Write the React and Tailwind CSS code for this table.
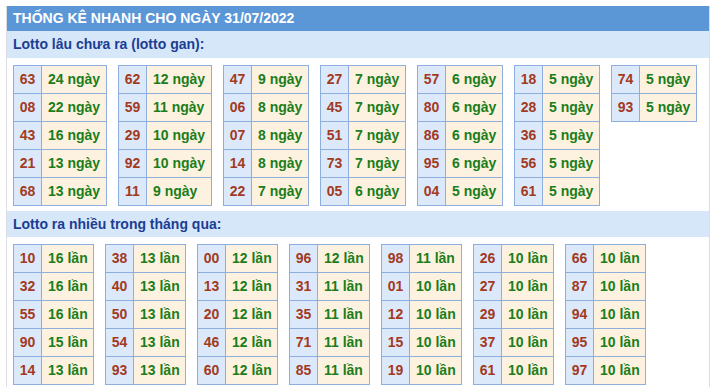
const ganTables = [
  { w: 'w-[65px]', rows: [['63', '24 ngày'], ['08', '22 ngày'], ['43', '16 ngày'], ['21', '13 ngày'], ['68', '13 ngày']] },
  { w: 'w-[65px]', rows: [['62', '12 ngày'], ['59', '11 ngày'], ['29', '10 ngày'], ['92', '10 ngày'], ['11', '9 ngày']] },
  { w: 'w-[57px]', rows: [['47', '9 ngày'], ['06', '8 ngày'], ['07', '8 ngày'], ['14', '8 ngày'], ['22', '7 ngày']] },
  { w: 'w-[57px]', rows: [['27', '7 ngày'], ['45', '7 ngày'], ['51', '7 ngày'], ['73', '7 ngày'], ['05', '6 ngày']] },
  { w: 'w-[57px]', rows: [['57', '6 ngày'], ['80', '6 ngày'], ['86', '6 ngày'], ['95', '6 ngày'], ['04', '5 ngày']] },
  { w: 'w-[57px]', rows: [['18', '5 ngày'], ['28', '5 ngày'], ['36', '5 ngày'], ['56', '5 ngày'], ['61', '5 ngày']] },
  { w: 'w-[57px]', rows: [['74', '5 ngày'], ['93', '5 ngày']] },
];

const nhieuTables = [
  [['10', '16 lần'], ['32', '16 lần'], ['55', '16 lần'], ['90', '15 lần'], ['14', '13 lần']],
  [['38', '13 lần'], ['40', '13 lần'], ['50', '13 lần'], ['54', '13 lần'], ['93', '13 lần']],
  [['00', '12 lần'], ['13', '12 lần'], ['20', '12 lần'], ['46', '12 lần'], ['60', '12 lần']],
  [['96', '12 lần'], ['31', '11 lần'], ['35', '11 lần'], ['71', '11 lần'], ['85', '11 lần']],
  [['98', '11 lần'], ['01', '10 lần'], ['12', '10 lần'], ['15', '10 lần'], ['19', '10 lần']],
  [['26', '10 lần'], ['27', '10 lần'], ['29', '10 lần'], ['37', '10 lần'], ['61', '10 lần']],
  [['66', '10 lần'], ['87', '10 lần'], ['94', '10 lần'], ['95', '10 lần'], ['97', '10 lần']],
];

const LottoTable = ({ rows, valueWidth }) => (
  <div className="flex flex-col shrink-0 border-l border-t border-[#8eaede] self-start">
    {rows.map(([num, val]) => (
      <div key={num} className="flex h-[28px]">
        <div className="w-[28px] flex items-center justify-center bg-[#dce9fa] border-r border-b border-[#8eaede] text-[#a23a1f]">
          {num}
        </div>
        <div className={`${valueWidth} flex items-center pl-[6px] bg-[#fdf2df] border-r border-b border-[#8eaede] text-[#1b7d1b] whitespace-nowrap`}>
          {val}
        </div>
      </div>
    ))}
  </div>
);

const SectionTitle = ({ children }) => (
  <div className="bg-[#d6e7f9] px-[6px] flex items-center text-[14px] font-bold text-[#1c3d94]">
    {children}
  </div>
);

export default function App() {
  return (
    <div className="w-[714px] h-[387px] bg-white overflow-hidden pt-[6px] font-['Liberation_Sans',Arial,sans-serif]">
      <div className="ml-[6px] w-[704px] h-[381px] border-l border-r border-[#dadde3]">
        <div className="h-[25px] bg-[#5b96d7] text-white font-bold text-[14px] flex items-center px-[6px] uppercase">
          THỐNG KÊ NHANH CHO NGÀY 31/07/2022
        </div>
        <SectionTitle>
          <span className="h-[27px] leading-[27px]">Lotto lâu chưa ra (lotto gan):</span>
        </SectionTitle>
        <div className="flex gap-[11px] px-[6px] pt-[7px] text-[14px] font-bold">
          {ganTables.map((t, i) => (
            <LottoTable key={i} rows={t.rows} valueWidth={t.w} />
          ))}
        </div>
        <div className="mt-[5px]">
          <SectionTitle>
            <span className="h-[26px] leading-[26px]">Lotto ra nhiều trong tháng qua:</span>
          </SectionTitle>
        </div>
        <div className="flex gap-[11px] px-[6px] pt-[7px] text-[14px] font-bold">
          {nhieuTables.map((rows, i) => (
            <LottoTable key={i} rows={rows} valueWidth="w-[52px]" />
          ))}
        </div>
      </div>
    </div>
  );
}
